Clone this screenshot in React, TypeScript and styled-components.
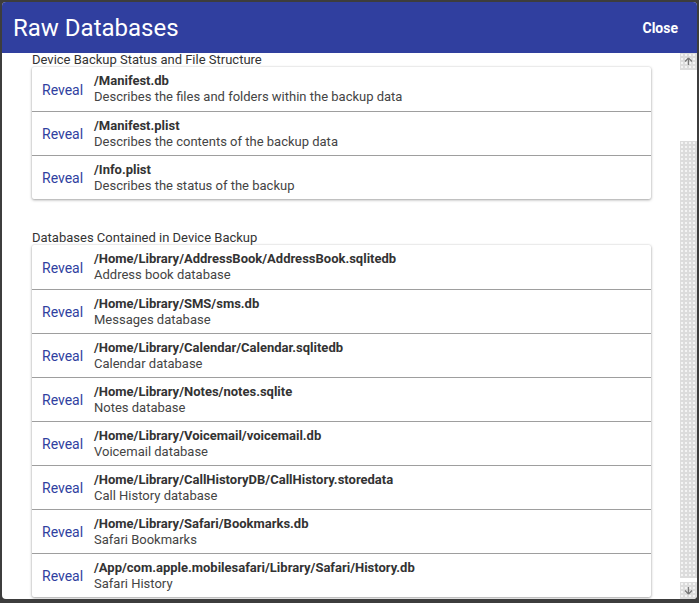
import React from "react";
import styled, { createGlobalStyle } from "styled-components";

const GlobalStyle = createGlobalStyle`
  html, body { margin: 0; padding: 0; background: #3d3d3d; }
  body { font-family: Roboto, "Noto Sans", "Liberation Sans", sans-serif; }
  * { box-sizing: border-box; }
`;

const Dialog = styled.div`
  margin: 2px;
  width: 695px;
  height: 597px;
  background: #ffffff;
  border-radius: 4px;
  overflow: hidden;
  display: flex;
  flex-direction: column;
`;

const Header = styled.header`
  height: 51px;
  flex: none;
  background: #303f9f;
  display: flex;
  align-items: center;
  justify-content: space-between;
  padding: 0 19px 0 11px;
  color: #ffffff;
`;

const Title = styled.h1`
  margin: 0;
  font-size: 24px;
  font-weight: 400;
  letter-spacing: 0;
`;

const CloseButton = styled.button`
  background: none;
  border: none;
  color: #ffffff;
  font-family: inherit;
  font-size: 14px;
  font-weight: 700;
  padding: 0;
  cursor: pointer;
`;

const Body = styled.div`
  flex: 1;
  display: flex;
  overflow: hidden;
`;

const Content = styled.div`
  flex: 1;
  overflow: hidden;
  padding: 0 29px 0 30px;
`;

const SectionLabel = styled.div<{ $first?: boolean }>`
  font-size: 13px;
  line-height: 14px;
  color: #333333;
  margin-top: ${(p) => (p.$first ? "0" : "32px")};
`;

const Card = styled.div`
  background: #ffffff;
  border-radius: 2px;
  box-shadow: 0 1px 3px rgba(0, 0, 0, 0.35), 0 0 2px rgba(0, 0, 0, 0.12);
`;

const Row = styled.div`
  height: 44px;
  display: flex;
  align-items: center;
  & + & {
    border-top: 1px solid #9e9e9e;
  }
`;

const RevealLink = styled.a`
  width: 62px;
  flex: none;
  padding-left: 10px;
  font-size: 14px;
  color: #303f9f;
  cursor: pointer;
  margin-top: 1px;
`;

const Info = styled.div`
  display: flex;
  flex-direction: column;
  font-size: 13px;
  line-height: 16px;
`;

const Path = styled.span`
  font-weight: 700;
  color: #333333;
`;

const Desc = styled.span`
  color: #444444;
`;

const Scrollbar = styled.div`
  width: 17px;
  flex: none;
  display: flex;
  flex-direction: column;
`;

const dotted = `
  background-color: #dcdcdc;
  background-image: radial-gradient(#f4f4f4 0.8px, transparent 1px);
  background-size: 4px 4px;
`;

const ScrollButton = styled.div`
  height: 17px;
  flex: none;
  ${dotted}
  display: flex;
  align-items: center;
  justify-content: center;
`;

const Thumb = styled.div`
  height: 71px;
  flex: none;
  background: #ffffff;
`;

const Track = styled.div`
  flex: 1;
  ${dotted}
`;

const ScrollSpacer = styled.div`
  height: 4px;
  flex: none;
  background: #ffffff;
`;

const Arrow = ({ down }: { down?: boolean }) => (
  <svg width="9" height="9" viewBox="0 0 9 9" style={{ transform: down ? "rotate(180deg)" : undefined }}>
    <path d="M4.5 1 L1 4.5 M4.5 1 L8 4.5 M4.5 1 L4.5 8" stroke="#777" strokeWidth="1.3" fill="none" />
  </svg>
);

type Item = { path: string; desc: string };

const status: Item[] = [
  { path: "/Manifest.db", desc: "Describes the files and folders within the backup data" },
  { path: "/Manifest.plist", desc: "Describes the contents of the backup data" },
  { path: "/Info.plist", desc: "Describes the status of the backup" },
];

const databases: Item[] = [
  { path: "/Home/Library/AddressBook/AddressBook.sqlitedb", desc: "Address book database" },
  { path: "/Home/Library/SMS/sms.db", desc: "Messages database" },
  { path: "/Home/Library/Calendar/Calendar.sqlitedb", desc: "Calendar database" },
  { path: "/Home/Library/Notes/notes.sqlite", desc: "Notes database" },
  { path: "/Home/Library/Voicemail/voicemail.db", desc: "Voicemail database" },
  { path: "/Home/Library/CallHistoryDB/CallHistory.storedata", desc: "Call History database" },
  { path: "/Home/Library/Safari/Bookmarks.db", desc: "Safari Bookmarks" },
  { path: "/App/com.apple.mobilesafari/Library/Safari/History.db", desc: "Safari History" },
];

const List = ({ items }: { items: Item[] }) => (
  <Card>
    {items.map((it, i) => (
      <Row key={i}>
        <RevealLink>Reveal</RevealLink>
        <Info>
          <Path>{it.path}</Path>
          <Desc>{it.desc}</Desc>
        </Info>
      </Row>
    ))}
  </Card>
);

export default function App() {
  return (
    <>
      <GlobalStyle />
      <Dialog>
        <Header>
          <Title>Raw Databases</Title>
          <CloseButton>Close</CloseButton>
        </Header>
        <Body>
          <Content>
            <SectionLabel $first>Device Backup Status and File Structure</SectionLabel>
            <List items={status} />
            <SectionLabel>Databases Contained in Device Backup</SectionLabel>
            <List items={databases} />
          </Content>
          <Scrollbar>
            <ScrollButton>
              <Arrow />
            </ScrollButton>
            <Thumb />
            <Track />
            <ScrollSpacer />
            <ScrollButton>
              <Arrow down />
            </ScrollButton>
          </Scrollbar>
        </Body>
      </Dialog>
    </>
  );
}
